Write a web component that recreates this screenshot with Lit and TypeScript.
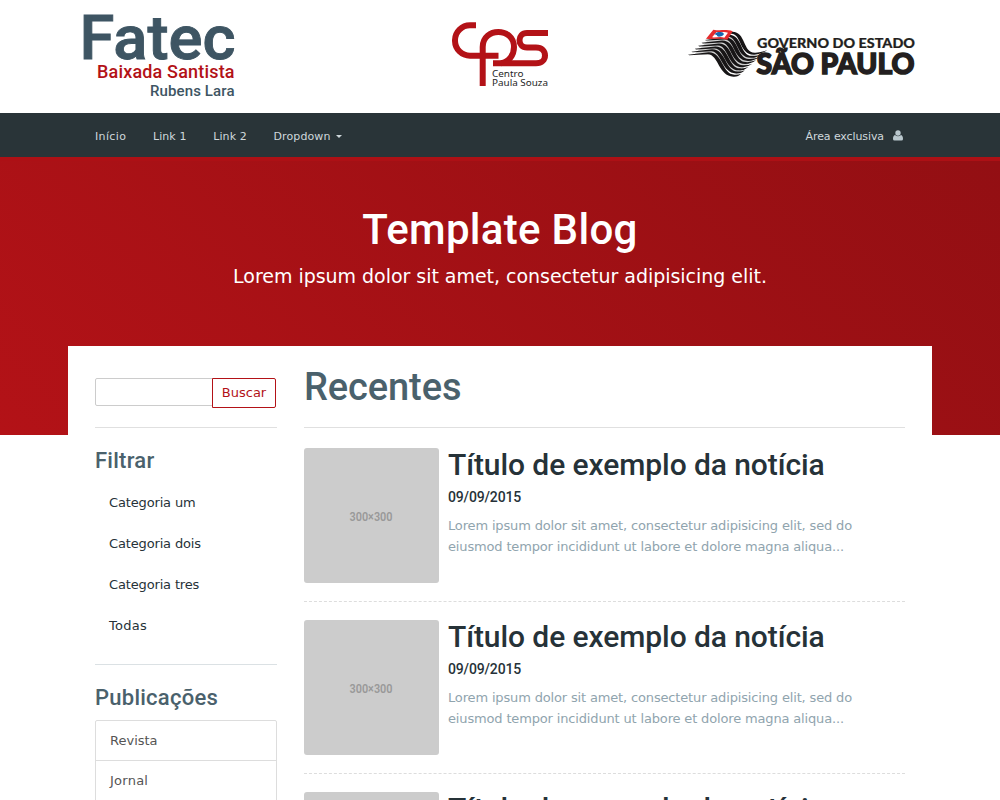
import { LitElement, html, css, svg } from "lit";
import { customElement } from "lit/decorators.js";

const mix = (a: number, b: number, t: number) => +(a + (b - a) * t).toFixed(1);

// Flag stripes, interpolated from the lowest wave (t = 0) to the highest (t = 1).
const stripes = Array.from({ length: 8 }, (_, i) => {
  const t = i / 7;
  const cx = mix(86, 156, t), cy = mix(99, 37, t);
  const bx = mix(163, 224, t), by = mix(165, 99, t);
  return `M${mix(24, 95, t)} ${mix(104, 42, t)}L${cx} ${cy - 2}C${cx + 42} ${cy - 3} ${bx - 36} ${by - 1} ${bx} ${by - 1}`
    + `Q${bx + 12} ${by} ${mix(183, 262, t)} ${mix(161, 91, t)}Q${bx + 12} ${by + 6} ${bx - 3} ${by + 5}`
    + `C${bx - 47} ${by + 4} ${cx + 29} ${cy + 5} ${cx - 2} ${cy + 4}L${mix(28, 99, t)} ${mix(106, 44, t)}Z`;
});

@customElement("app-root")
export class AppRoot extends LitElement {
  static styles = css`
    :host { display: block; height: 800px; overflow: hidden; background: #fff; color: #263238;
      font-family: "DejaVu Sans", sans-serif; font-size: 13px; }
    * { box-sizing: border-box; }
    h1, h2, h3, p, ul { margin: 0; padding: 0; font-weight: 500; }
    h1, h2, h3, .date { font-family: Roboto, sans-serif; font-weight: 500; }
    ul { list-style: none; }
    .brands { height: 113px; display: flex; justify-content: center; }
    .brands svg { display: block; }
    nav { height: 44px; background: #293438; color: #cfd8dc; font-size: 11px; display: flex;
      justify-content: space-between; padding: 2px 97px 0 95px; align-items: center; }
    .links { display: flex; gap: 26.700px; }
    .links li, .user { display: flex; align-items: center; white-space: nowrap; }
    .links li { letter-spacing: .1px; }
    .links li:first-child { letter-spacing: .35px; }
    .user { letter-spacing: -.1px; }
    .caret { border: 3px solid transparent; border-top-color: #cfd8dc; border-bottom: 0; margin-left: 6px; margin-top: 1px; }
    .user svg { margin-left: 9px; margin-top: -2px; }
    .hero { height: 278px; border-top: 4px solid #ad1015; text-align: center; color: #fff;
      background: linear-gradient(45deg, #b31217, #930f13); padding-top: 44px; }
    .hero h1 { font-size: 42px; line-height: 50px; letter-spacing: .3px; }
    .hero p { font-size: 19px; line-height: 28px; margin-top: 7px; font-weight: 400; letter-spacing: -.03px; }
    .card { position: relative; width: 864px; margin: -89px auto 0; background: #fff; height: 700px;
      display: grid; grid-template-columns: 182px 601px; column-gap: 27px; padding: 0 27px; align-items: start; }
    aside { padding-top: 32px; }
    .search { display: flex; align-items: flex-start; height: 50px; border-bottom: 1px solid #e0e0e0; }
    .field { width: 118px; height: 28px; border: 1px solid #ccc; border-radius: 2px 0 0 2px; margin-right: -1px; }
    .go { width: 64px; height: 30px; border: 1px solid #b31217; border-radius: 0 2px 2px 0; background: #fff;
      color: #b31217; font: 13px "DejaVu Sans", sans-serif; padding: 0 0 2px; }
    aside h3 { font-size: 22px; line-height: 26px; color: #4a616c; letter-spacing: .25px; }
    .filter h3 { margin-top: 20px; }
    .filter { border-bottom: 1px solid #dbe1e4; height: 237px; overflow: hidden; }
    .filter ul { padding: 8px 0 0 14px; }
    .filter li { height: 41px; line-height: 41px; letter-spacing: -.15px; }
    .filter li:last-child { letter-spacing: .3px; }
    .pubs h3 { margin-top: 20px; }
    .pubs ul { margin-top: 9px; border: 1px solid #ddd; border-radius: 2px; }
    .pubs li { height: 40px; line-height: 39px; padding-left: 14px; border-bottom: 1px solid #ddd; color: #555; }
    .pubs li:last-child { letter-spacing: .25px; }
    main h2 { font-size: 38px; line-height: 46px; color: #4a616c; padding: 18px 0 0; height: 82px;
      border-bottom: 1px solid #e0e0e0; letter-spacing: -.1px; }
    article { display: flex; height: 154px; border-bottom: 1px dashed #ddd; margin-top: 20px; }
    article + article { margin-top: 18px; }
    .thumb { width: 135px; height: 135px; border-radius: 3px; background: #ccc; flex: none; display: block; }
    .body { padding-left: 9px; }
    .body h3 { font-size: 30px; line-height: 34px; white-space: nowrap; letter-spacing: -.08px; }
    .date { font-size: 14px; line-height: 18px; margin-top: 6px; letter-spacing: -.15px; }
    .text { color: #90a4ae; line-height: 21px; margin-top: 9px; white-space: nowrap; font-weight: 400; letter-spacing: -.155px; }
  `;

  private article() {
    return html`<article>
      <svg class="thumb" viewBox="0 0 135 135"><text x="45.500" y="72.500" font-family="Roboto" font-weight="600" font-size="13.500" fill="#999" textLength="43" lengthAdjust="spacingAndGlyphs">300×300</text></svg>
      <div class="body">
        <h3>Título de exemplo da notícia</h3>
        <p class="date">09/09/2015</p>
        <p class="text">Lorem ipsum dolor sit amet, consectetur adipisicing elit, sed do<br />eiusmod tempor incididunt ut labore et dolore magna aliqua...</p>
      </div>
    </article>`;
  }

  render() {
    return html`
      <header class="brands">
        <svg width="1000" height="113" viewBox="0 0 1000 113">
          <g font-family="Roboto" font-weight="500" fill="#3e5563">
            <text x="79.500" y="58.500" font-size="62" textLength="156" lengthAdjust="spacingAndGlyphs" stroke="#3e5563" stroke-width=".9">Fatec</text>
            <text x="97" y="78" font-size="18" fill="#b31217" textLength="137.500">Baixada Santista</text>
            <text x="150" y="96" font-size="15" textLength="84.500">Rubens Lara</text>
          </g>
          <g fill="none" stroke="#b31217" stroke-width="6">
            <path d="M476 25.300H470A15 15 0 0 0 455 40V41A15 15 0 0 0 470 55.700H498.500" />
            <path d="M482.700 86V47C482.700 27 514 27 514 47C514 55 509 62 501 63.300" />
            <path d="M548 33H527C517 33 517 47.500 527 47.500H536C548 47.500 548 63.300 536 63.300H493" />
          </g>
          <g font-family="Noto Sans" font-size="9.500" fill="#262626">
            <text x="492" y="76.500" textLength="31.500" lengthAdjust="spacingAndGlyphs">Centro</text>
            <text x="492" y="85.700" textLength="56" lengthAdjust="spacingAndGlyphs">Paula Souza</text>
          </g>
          <g transform="translate(680 20) scale(.3333)">
            <path fill="#cfcfcf" d="M88 56C135 46 155 43 170 70C190 102 210 115 233 108L170 161C140 160 120 120 95 104L45 101Z" />
            ${stripes.map((d) => svg`<path d=${d} fill="#171516" />`)}
            <path fill="#e52b2d" d="M100 29C120 33 140 27 158 34L142 59C122 53 104 59 78 56Z" />
            <path fill="#fff" d="M110 36C122 38 133 34 144 38L133 53C121 49 110 53 96 52Z" />
            <path fill="#1b67ae" d="M112 37C124 33 136 39 130 45C124 51 110 52 111 46L103 42Z" />
          </g>
          <g font-family="Lato" font-weight="900" fill="#231f20" stroke="#231f20">
            <text x="757" y="47.500" font-size="13" stroke-width=".2" textLength="158" lengthAdjust="spacingAndGlyphs">GOVERNO DO ESTADO</text>
            <text x="756.500" y="74" font-size="28.500" stroke-width="1.500" textLength="158" lengthAdjust="spacingAndGlyphs">SÃO PAULO</text>
          </g>
        </svg>
      </header>
      <nav>
        <ul class="links">
          <li>Início</li><li>Link 1</li><li>Link 2</li><li>Dropdown<span class="caret"></span></li>
        </ul>
        <div class="user">Área exclusiva
          <svg width="10" height="11" viewBox="0 0 10 11" fill="#b9c7cd"><circle cx="5" cy="3" r="2.700" /><path d="M2 5C.5 5.500 0 7 0 9Q0 10.500 1.500 10.500H8.500Q10 10.500 10 9C10 7 9.500 5.500 8 5Q5 7.500 2 5Z" /></svg>
        </div>
      </nav>
      <section class="hero">
        <h1>Template Blog</h1>
        <p>Lorem ipsum dolor sit amet, consectetur adipisicing elit.</p>
      </section>
      <div class="card">
        <aside>
          <div class="search"><div class="field"></div><button class="go">Buscar</button></div>
          <section class="filter">
            <h3>Filtrar</h3>
            <ul><li>Categoria um</li><li>Categoria dois</li><li>Categoria tres</li><li>Todas</li></ul>
          </section>
          <section class="pubs">
            <h3>Publicações</h3>
            <ul><li>Revista</li><li>Jornal</li></ul>
          </section>
        </aside>
        <main>
          <h2>Recentes</h2>
          ${[0, 1, 2].map(() => this.article())}
        </main>
      </div>
    `;
  }
}
